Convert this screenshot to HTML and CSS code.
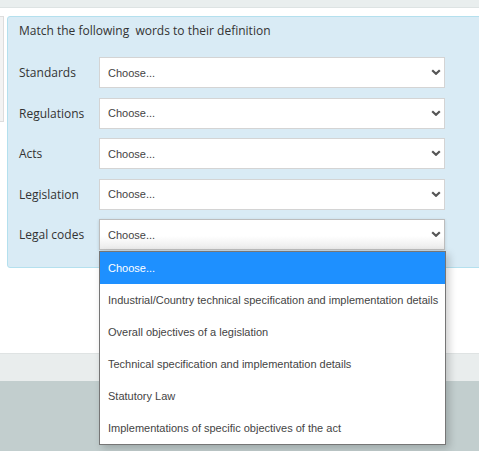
FILE: index.html
```html
<!DOCTYPE html>
<html lang="en">
<head>
    <meta charset="UTF-8">
    <meta name="viewport" content="width=device-width, initial-scale=1.0">
    <title>Match the words</title>
    <link rel="stylesheet" href="styles.css">
</head>
<body>
    <div class="topbar"></div>
    <div class="content">
        <div class="side-stub"></div>
        <div class="quiz-panel">
            <p class="quiz-title">Match the following&nbsp; words to their definition</p>

            <div class="match-row">
                <label for="m1">Standards</label>
                <div class="select-wrap">
                    <select id="m1"><option>Choose...</option></select>
                    <svg class="chevron" viewBox="0 0 10 6"><path d="M1.2 1.2 L5 4.8 L8.8 1.2"/></svg>
                </div>
            </div>
            <div class="match-row">
                <label for="m2">Regulations</label>
                <div class="select-wrap">
                    <select id="m2"><option>Choose...</option></select>
                    <svg class="chevron" viewBox="0 0 10 6"><path d="M1.2 1.2 L5 4.8 L8.8 1.2"/></svg>
                </div>
            </div>
            <div class="match-row">
                <label for="m3">Acts</label>
                <div class="select-wrap">
                    <select id="m3"><option>Choose...</option></select>
                    <svg class="chevron" viewBox="0 0 10 6"><path d="M1.2 1.2 L5 4.8 L8.8 1.2"/></svg>
                </div>
            </div>
            <div class="match-row">
                <label for="m4">Legislation</label>
                <div class="select-wrap">
                    <select id="m4"><option>Choose...</option></select>
                    <svg class="chevron" viewBox="0 0 10 6"><path d="M1.2 1.2 L5 4.8 L8.8 1.2"/></svg>
                </div>
            </div>
            <div class="match-row">
                <label for="m5">Legal codes</label>
                <div class="select-wrap">
                    <select id="m5" class="open"><option>Choose...</option></select>
                    <svg class="chevron" viewBox="0 0 10 6"><path d="M1.2 1.2 L5 4.8 L8.8 1.2"/></svg>
                    <ul class="dropdown">
                        <li class="active">Choose...</li>
                        <li>Industrial/Country technical specification and implementation details</li>
                        <li>Overall objectives of a legislation</li>
                        <li>Technical specification and implementation details</li>
                        <li>Statutory Law</li>
                        <li>Implementations of specific objectives of the act</li>
                    </ul>
                </div>
            </div>
        </div>
    </div>
    <div class="footer-band"></div>
</body>
</html>
```

FILE: styles.css
```css
html {
    overflow: hidden;
}
body {
    margin: 0;
    min-height: 100vh;
    background-color: #c2cece;
    font-family: "Open Sans", Arial, sans-serif;
}
.topbar {
    height: 7px;
    background: #e9eeee;
    border-bottom: 1px solid #dde3e3;
}
.content {
    display: flex;
    align-items: flex-start;
    height: 345px;
    box-sizing: border-box;
    padding-top: 8px;
    background: white;
    position: relative;
    z-index: 2;
}
.side-stub {
    width: 3px;
    height: 104px;
    background: #f3f3f3;
    border: 1px solid #dddddd;
    border-left: none;
    flex-shrink: 0;
}
.quiz-panel {
    margin-left: 3px;
    flex: 1;
    margin-right: -8px;
    background: #d9ebf5;
    border: 1px solid #b4e0ee;
    border-radius: 3px;
    padding: 5px 11px 17px;
}
.quiz-title {
    margin: 0 0 17px;
    font-size: 12px;
    line-height: 18px;
    color: #333;
}
.match-row {
    display: flex;
    align-items: center;
    height: 31px;
    margin-bottom: 9.5px;
}
.match-row:last-child {
    margin-bottom: 0;
}
.match-row label {
    width: 80px;
    font-size: 12px;
    color: #333;
}
.select-wrap {
    position: relative;
    width: 346px;
    height: 31px;
}
.select-wrap select {
    width: 100%;
    height: 31px;
    box-sizing: border-box;
    border: 1px solid #d4d4d4;
    border-radius: 0;
    background: white;
    padding: 0 8px;
    font-family: "Liberation Sans", Arial, sans-serif;
    font-size: 11px;
    color: #444;
    appearance: none;
    -webkit-appearance: none;
    outline: none;
}
.select-wrap select.open {
    border-color: #bdbdbd;
    background: linear-gradient(#ffffff 55%, #ebebeb);
    box-shadow: 0 1px 3px rgba(0, 0, 0, 0.15);
}
.chevron {
    position: absolute;
    left: 332px;
    top: 12px;
    width: 10px;
    height: 6px;
    pointer-events: none;
}
.chevron path {
    fill: none;
    stroke: #555;
    stroke-width: 2.2;
}
.dropdown {
    position: absolute;
    top: 32px;
    left: 0;
    width: 347px;
    box-sizing: border-box;
    margin: 0;
    padding: 0;
    list-style: none;
    background: white;
    border: 1px solid #767676;
    box-shadow: 3px 3px 8px rgba(0, 0, 0, 0.2);
    z-index: 10;
}
.dropdown li {
    height: 32px;
    line-height: 32px;
    padding: 0 8px;
    font-family: "Liberation Sans", Arial, sans-serif;
    font-size: 11px;
    color: #444;
    white-space: nowrap;
}
.dropdown li.active {
    background: #1e90ff;
    color: white;
}
.footer-band {
    height: 27px;
    background: #e9eded;
    border-top: 1px solid #dfe3e3;
}
```
